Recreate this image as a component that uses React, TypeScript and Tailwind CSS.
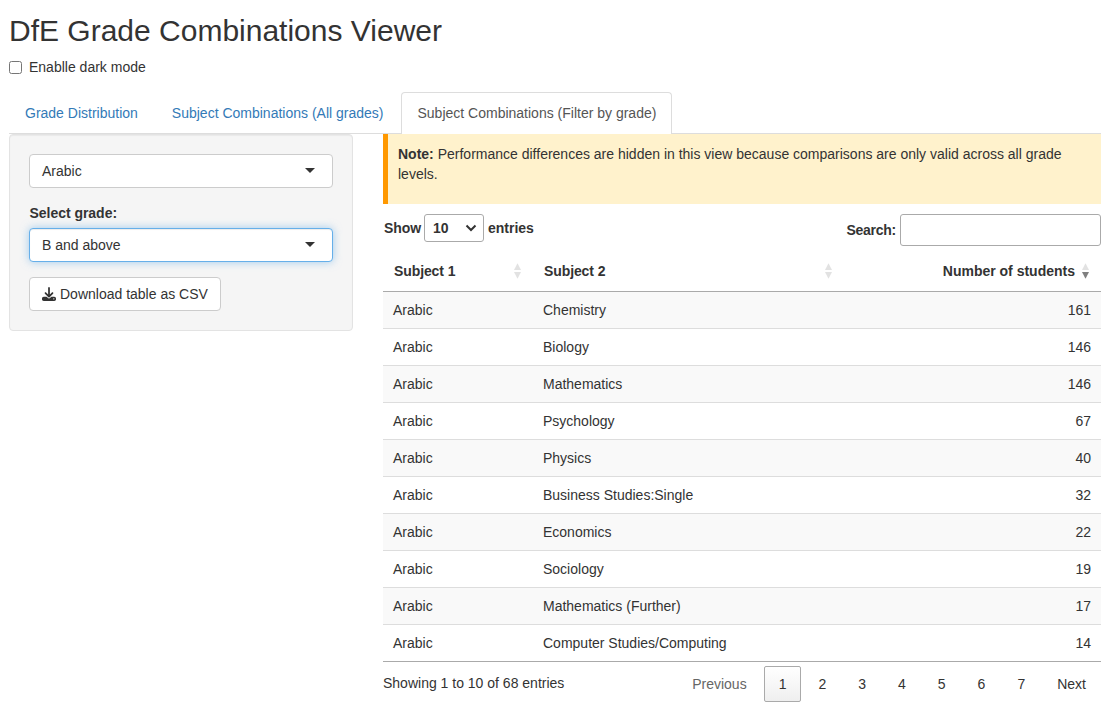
import React from "react";

type Row = { subject1: string; subject2: string; students: number };

const rows: Row[] = [
  { subject1: "Arabic", subject2: "Chemistry", students: 161 },
  { subject1: "Arabic", subject2: "Biology", students: 146 },
  { subject1: "Arabic", subject2: "Mathematics", students: 146 },
  { subject1: "Arabic", subject2: "Psychology", students: 67 },
  { subject1: "Arabic", subject2: "Physics", students: 40 },
  { subject1: "Arabic", subject2: "Business Studies:Single", students: 32 },
  { subject1: "Arabic", subject2: "Economics", students: 22 },
  { subject1: "Arabic", subject2: "Sociology", students: 19 },
  { subject1: "Arabic", subject2: "Mathematics (Further)", students: 17 },
  { subject1: "Arabic", subject2: "Computer Studies/Computing", students: 14 },
];

function SortArrows({ descending = false }: { descending?: boolean }) {
  return (
    <svg width="8" height="16" viewBox="0 0 8 16" className="shrink-0">
      <path d="M4.500 0.300 8 7H1Z" fill="#e2e2e2" />
      <path d="M1 9H8L4.500 15.700Z" fill={descending ? "#808080" : "#e2e2e2"} />
    </svg>
  );
}

function Picker({ value, focused = false }: { value: string; focused?: boolean }) {
  return (
    <div
      className={
        "flex h-[34px] items-center justify-between rounded-[4px] border bg-white pl-3 pr-[17px] " +
        (focused
          ? "border-[#66afe9] shadow-[inset_0_1px_1px_rgba(0,0,0,0.075),0_0_8px_rgba(102,175,233,0.6)]"
          : "border-[#ccc]")
      }
    >
      <span>{value}</span>
      <svg width="10" height="5" viewBox="0 0 10 5" className="mb-px">
        <path d="M0 0H10L5 5Z" fill="#333" />
      </svg>
    </div>
  );
}

function DownloadIcon() {
  return (
    <svg width="14" height="14" viewBox="0 0 512 512" fill="#333">
      <path d="M288 32c0-17.700-14.300-32-32-32s-32 14.300-32 32v242.700l-73.400-73.400c-12.500-12.500-32.800-12.500-45.300 0s-12.500 32.800 0 45.300l128 128c12.500 12.500 32.800 12.500 45.300 0l128-128c12.500-12.500 12.500-32.800 0-45.300s-32.800-12.500-45.300 0L288 274.700V32zM64 352c-35.300 0-64 28.700-64 64v32c0 35.300 28.700 64 64 64h384c35.300 0 64-28.700 64-64v-32c0-35.300-28.700-64-64-64H346.500l-45.300 45.300c-25 25-65.500 25-90.500 0L165.500 352H64zm368 56a24 24 0 1 1 0 48 24 24 0 1 1 0-48z" />
    </svg>
  );
}

function Tabs() {
  return (
    <nav className="flex h-[42px] gap-[2px] border-b border-[#ddd] leading-5">
      <a className="h-[41px] px-4 pt-[11px] text-[#337ab7]">Grade Distribution</a>
      <a className="h-[41px] px-4 pt-[11px] text-[#337ab7]">Subject Combinations (All grades)</a>
      <a className="h-[42px] rounded-t-[4px] border border-b-0 border-[#ddd] bg-white px-[15px] pt-[10px] text-[#555]">
        Subject Combinations (Filter by grade)
      </a>
    </nav>
  );
}

function Sidebar() {
  return (
    <aside className="h-[197px] w-[344px] shrink-0 rounded-[4px] border border-[#e3e3e3] bg-[#f5f5f5] p-[19px] shadow-[inset_0_1px_1px_rgba(0,0,0,0.05)]">
      <Picker value="Arabic" />
      <div className="mb-[5px] ml-[0.5px] mt-[15px] font-bold tracking-[-0.03px]">Select grade:</div>
      <Picker value="B and above" focused />
      <button className="mt-[15px] flex h-[34px] items-center gap-1 rounded-[4px] border border-[#ccc] bg-white px-3">
        <DownloadIcon />
        <span>Download table as CSV</span>
      </button>
    </aside>
  );
}

function Pagination() {
  return (
    <div className="flex h-9 gap-[2px] leading-[36px]">
      <span className="px-[15px] text-[#666]">Previous</span>
      <span className="rounded-[2px] border border-[#aaa] bg-linear-to-b from-white to-[#efefef] px-[14px] leading-[34px]">
        1
      </span>
      {[2, 3, 4, 5, 6, 7].map((page) => (
        <span key={page} className="px-[15px]">
          {page}
        </span>
      ))}
      <span className="px-[15px]">Next</span>
    </div>
  );
}

function ResultsTable() {
  return (
    <table className="w-full table-fixed border-separate border-spacing-0 border-b border-[#aaa]">
      <colgroup>
        <col className="w-[150px]" />
        <col className="w-[311px]" />
        <col />
      </colgroup>
      <thead>
        <tr className="h-[41px] text-left">
          <th className="border-b border-[#aaa] p-0">
            <div className="flex items-center justify-between pl-[11px] pr-[12px]">
              <span className="tracking-[-0.1px]">Subject 1</span>
              <SortArrows />
            </div>
          </th>
          <th className="border-b border-[#aaa] p-0">
            <div className="flex items-center justify-between pl-[11px] pr-[12px]">
              <span className="tracking-[-0.1px]">Subject 2</span>
              <SortArrows />
            </div>
          </th>
          <th className="border-b border-[#aaa] p-0">
            <div className="flex items-center justify-end gap-[6px] pr-[12px]">
              Number of students
              <SortArrows descending />
            </div>
          </th>
        </tr>
      </thead>
      <tbody>
        {rows.map((row) => (
          <tr
            key={row.subject2}
            className="group h-[37px] odd:bg-[#f9f9f9] first:h-9"
          >
            <td className="border-t border-[#ddd] px-[10px] py-0 group-first:border-t-0">{row.subject1}</td>
            <td className="border-t border-[#ddd] px-[10px] py-0 group-first:border-t-0">{row.subject2}</td>
            <td className="border-t border-[#ddd] px-[10px] py-0 text-right group-first:border-t-0">
              {row.students}
            </td>
          </tr>
        ))}
      </tbody>
    </table>
  );
}

export default function App() {
  return (
    <div className="h-[727px] w-[1106px] overflow-hidden bg-white pl-[9px] pr-[5px] pt-[14px] font-['Liberation_Sans',Arial,sans-serif] text-[14px] leading-5 text-[#333]">
      <h2 className="h-[33px] text-[30px] leading-[33px]">DfE Grade Combinations Viewer</h2>
      <label className="mb-[15px] mt-[10px] flex h-5 items-center gap-[7px]">
        <input type="checkbox" className="m-0 h-[13px] w-[13px]" />
        Enablle dark mode
      </label>
      <Tabs />
      <div className="flex items-start gap-[30px]">
        <Sidebar />
        <main className="min-w-0 flex-1">
          <div className="h-[70px] border-l-[5px] border-[#ff9800] bg-[#fff2cc] p-[10px]">
            <strong>Note:</strong> Performance differences are hidden in this view because comparisons are only valid
            across all grade levels.
          </div>
          <div className="flex h-[47px] items-start justify-between pt-[10px] font-bold">
            <div className="flex h-7 items-center gap-1">
              <span className="-mr-px ml-px tracking-[-0.1px]">Show</span>
              <div className="flex h-7 w-[60px] items-center justify-between rounded-[3px] border border-[#aaa] pl-2 pr-[6px]">
                10
                <svg width="12" height="8" viewBox="0 0 12 8" fill="none">
                  <path d="M1.500 1.500 6 6 10.500 1.500" stroke="#333" strokeWidth="2" />
                </svg>
              </div>
              entries
            </div>
            <label className="flex h-8 items-center gap-1">
              <span className="tracking-[-0.25px]">Search:</span>
              <input type="text" className="h-8 w-[201px] rounded-[3px] border border-[#aaa] px-[5px]" />
            </label>
          </div>
          <ResultsTable />
          <div className="flex items-start justify-between pt-1">
            <div className="mt-[7px]">Showing 1 to 10 of 68 entries</div>
            <Pagination />
          </div>
        </main>
      </div>
    </div>
  );
}
